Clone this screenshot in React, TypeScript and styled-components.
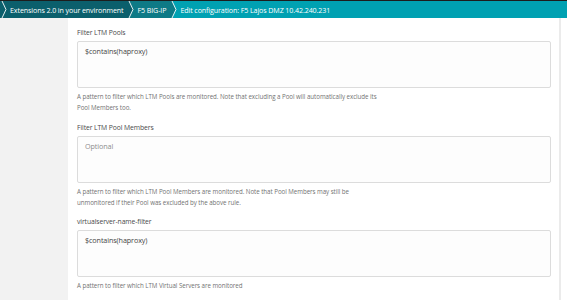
import React from "react";
import styled, { createGlobalStyle } from "styled-components";

const Global = createGlobalStyle`
  html, body { margin: 0; padding: 0; background: #ffffff; }
  body { font-family: "Open Sans", "Noto Sans", sans-serif; }
  * { box-sizing: border-box; }
`;

const Page = styled.div`
  display: flex;
  flex-direction: column;
  width: 567px;
  height: 300px;
  overflow: hidden;
`;

const TopLine = styled.div`
  height: 1px;
  background: #1d1d1d;
`;

const Crumbs = styled.nav`
  display: flex;
  height: 17px;
  background: #00a1b2;
`;

const Crumb = styled.div<{ $bg: string; $grow?: boolean }>`
  display: flex;
  align-items: center;
  background: ${(p) => p.$bg};
  color: #ffffff;
  font-size: 7.1px;
  letter-spacing: -0.1px;
  white-space: nowrap;
  flex: ${(p) => (p.$grow ? "1" : "none")};
`;

const CrumbLabel = styled.span`
  padding: 0 4px 0 3px;
`;

const Sep = ({ left, right }: { left: string; right: string }) => (
  <svg width="7" height="17" viewBox="0 0 7 17" style={{ display: "block" }}>
    <rect x="0" y="0" width="7" height="17" fill={right} />
    <polygon points="0,0 2,0 6,8.5 2,17 0,17" fill={left} />
    <polyline points="2,0 6,8.5 2,17" fill="none" stroke="#ffffff" strokeWidth="0.9" />
  </svg>
);

const Body = styled.div`
  flex: 1;
  display: flex;
  min-height: 0;
`;

const Sidebar = styled.aside`
  width: 68px;
  background: #f2f2f2;
`;

const Main = styled.main`
  flex: 1;
  background: #ffffff;
  padding: 10px 8px 0 9px;
  display: flex;
  flex-direction: column;
  gap: 9.5px;
`;

const Scroll = styled.div`
  width: 8px;
  border-left: 2px solid #ebebeb;
  background: #ffffff;
`;

const Field = styled.div`
  display: flex;
  flex-direction: column;
`;

const Label = styled.label`
  font-size: 6.8px;
  line-height: 10px;
  color: #4a4a4a;
  margin-bottom: 3px;
  letter-spacing: -0.1px;
`;

const Box = styled.div`
  height: 47px;
  border: 1px solid #dcdcdc;
  border-radius: 2px;
  background: #fdfdfd;
  padding: 3px 7px;
  font-size: 7.2px;
  line-height: 12px;
  letter-spacing: -0.1px;
`;

const Value = styled.span<{ $placeholder?: boolean }>`
  color: ${(p) => (p.$placeholder ? "#8d8d8d" : "#454545")};
`;

const Help = styled.p`
  margin: 3px 0 0;
  font-size: 6.2px;
  line-height: 11px;
  color: #727272;
  white-space: pre-line;
  letter-spacing: -0.05px;
`;

const fields = [
  {
    label: "Filter LTM Pools",
    value: "$contains(haproxy)",
    help: "A pattern to filter which LTM Pools are monitored. Note that excluding a Pool will automatically exclude its\nPool Members too.",
  },
  {
    label: "Filter LTM Pool Members",
    value: "",
    help: "A pattern to filter which LTM Pool Members are monitored. Note that Pool Members may still be\nunmonitored if their Pool was excluded by the above rule.",
  },
  {
    label: "virtualserver-name-filter",
    value: "$contains(haproxy)",
    help: "A pattern to filter which LTM Virtual Servers are monitored",
  },
];

export default function App() {
  const c1 = "#0b5f6c";
  const c2 = "#0e7a86";
  const c3 = "#00a1b2";
  return (
    <Page>
      <Global />
      <TopLine />
      <Crumbs>
        <Crumb $bg={c1}>
          <Sep left={c1} right={c1} />
          <CrumbLabel>Extensions 2.0 in your environment</CrumbLabel>
        </Crumb>
        <Crumb $bg={c2}>
          <Sep left={c1} right={c2} />
          <CrumbLabel>F5 BIG-IP</CrumbLabel>
        </Crumb>
        <Crumb $bg={c3} $grow>
          <Sep left={c2} right={c3} />
          <CrumbLabel>Edit configuration: F5 Lajos DMZ 10.42.240.231</CrumbLabel>
        </Crumb>
      </Crumbs>
      <Body>
        <Sidebar />
        <Main>
          {fields.map((f) => (
            <Field key={f.label}>
              <Label>{f.label}</Label>
              <Box>
                <Value $placeholder={!f.value}>{f.value || "Optional"}</Value>
              </Box>
              <Help>{f.help}</Help>
            </Field>
          ))}
        </Main>
        <Scroll />
      </Body>
    </Page>
  );
}
